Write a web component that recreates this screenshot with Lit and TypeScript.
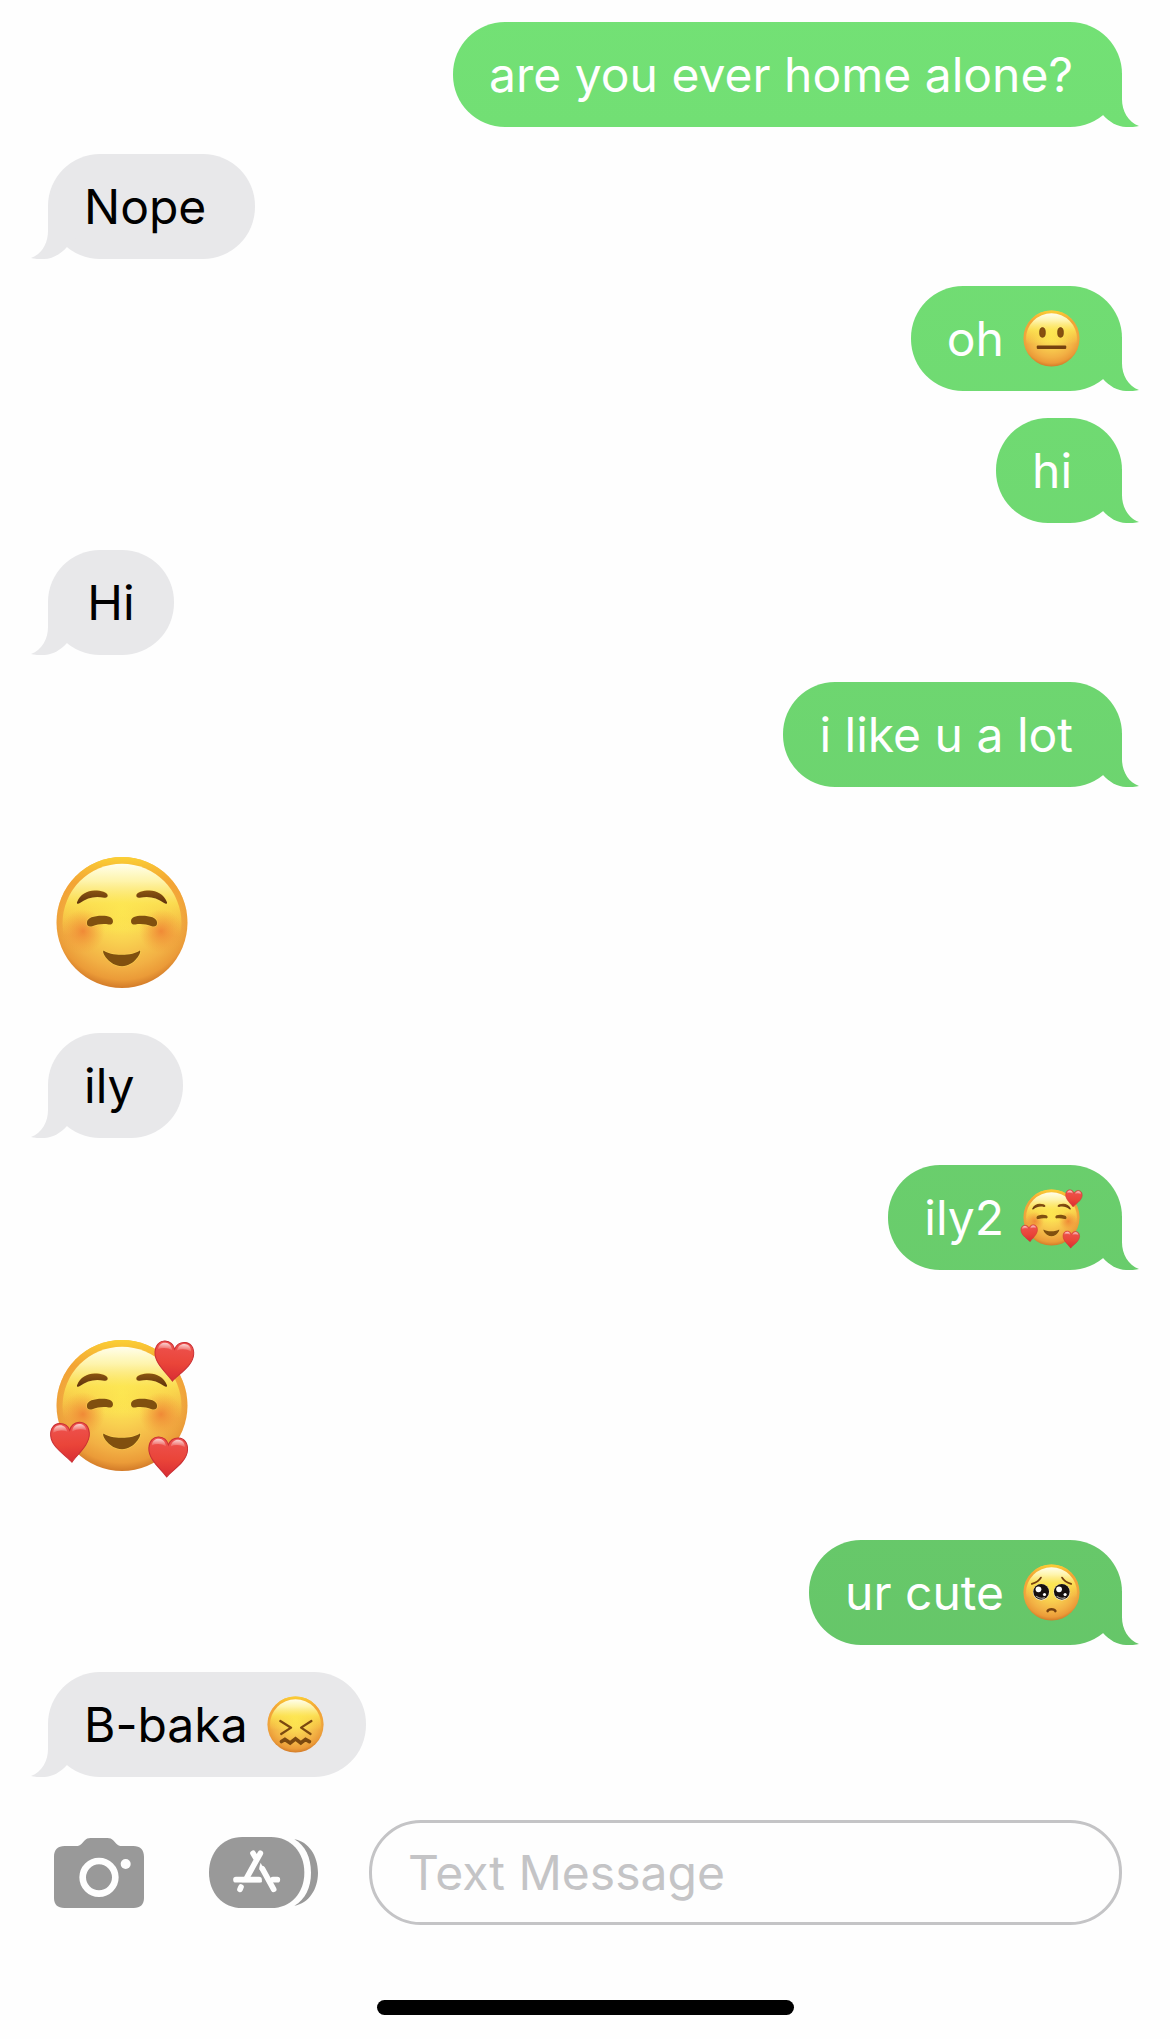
import { LitElement, html, svg, css, nothing } from "lit";
import { customElement, property } from "lit/decorators.js";

type Mood = "neutral" | "smile" | "hearts" | "pleading" | "confounded";

interface Message {
  from: "me" | "them";
  text?: string;
  emoji?: Mood;
}

const MESSAGES: Message[] = [
  { from: "me", text: "are you ever home alone?" },
  { from: "them", text: "Nope" },
  { from: "me", text: "oh", emoji: "neutral" },
  { from: "me", text: "hi" },
  { from: "them", text: "Hi" },
  { from: "me", text: "i like u a lot" },
  { from: "them", emoji: "smile" },
  { from: "them", text: "ily" },
  { from: "me", text: "ily2", emoji: "hearts" },
  { from: "them", emoji: "hearts" },
  { from: "me", text: "ur cute", emoji: "pleading" },
  { from: "them", text: "B-baka", emoji: "confounded" },
];

const LABELS: Record<Mood, string> = {
  neutral: "neutral face",
  smile: "smiling face",
  hearts: "smiling face with hearts",
  pleading: "pleading face",
  confounded: "confounded face",
};

const heart = (x: number, y: number, angle: number) => svg`
  <g transform="translate(${x} ${y}) rotate(${angle})">
    <path d="M0 60C-14 40-58 12-58-24C-58-46-45-58-30-58C-16-58-5-51 0-36C5-51 16-58 30-58C45-58 58-46 58-24C58 12 14 40 0 60Z" fill="url(#heart)" stroke="#c92f34" stroke-width="3"/>
    <path d="M-50-32C-48-48-38-53-29-53C-18-53-10-46-7-32Q-28-42-50-32ZM50-32C48-48 38-53 29-53C18-53 10-46 7-32Q28-42 50-32Z" fill="url(#shine)"/>
  </g>`;

const blushing = svg`
  <circle cx="-117" cy="26" r="66" fill="url(#blush)"/>
  <circle cx="117" cy="26" r="66" fill="url(#blush)"/>
  <g fill="url(#ink)" stroke="#ffe35a" stroke-opacity=".45" stroke-width="3" paint-order="stroke">
    <path d="M-134-62C-126-84-104-96-82-96C-62-96-44-90-43-82C-42-75-47-73-53-74C-82-80-104-74-126-58C-132-54-137-56-134-62Z"/>
    <path d="M134-62C126-84 104-96 82-96C62-96 44-90 43-82C42-75 47-73 53-74C82-80 104-74 126-58C132-54 137-56 134-62Z"/>
  </g>
  <g fill="#80500f" stroke="#ffe35a" stroke-opacity=".5" stroke-width="4" paint-order="stroke">
    <path d="M-105 0C-104-14-84-20-60-20C-40-20-27-15-27-4C-27 4-32 7-40 6C-58 3-73 6-89 11C-99 14-106 10-105 0Z"/>
    <path d="M105 0C104-14 84-20 60-20C40-20 27-15 27-4C27 4 32 7 40 6C58 3 73 6 89 11C99 14 106 10 105 0Z"/>
    <path d="M-55 84C-36 101 34 101 53 84C61 86 38 131 0 131C-38 131-63 88-55 84Z"/>
  </g>`;

const FEATURES: Record<Mood, unknown> = {
  smile: blushing,
  hearts: svg`${blushing}${heart(155, -133, 4)}${heart(-154, 110, -4)}${heart(137, 154, 3)}`,
  neutral: svg`
    <g fill="#87500f" stroke="#6d3f10" stroke-width="5">
      <ellipse cx="-63" cy="-42" rx="20" ry="34"/>
      <ellipse cx="63" cy="-42" rx="20" ry="34"/>
    </g>
    <rect x="-103" y="49" width="206" height="24" rx="7" fill="#75420f"/>`,
  pleading: svg`
    <g fill="none" stroke="#75400f" stroke-width="13" stroke-linecap="round">
      <path d="M-137-60C-108-69-86-83-74-104"/>
      <path d="M137-60C108-69 86-83 74-104"/>
      <path d="M-27 130C-20 113 20 113 27 130" stroke-width="18"/>
    </g>
    <circle cx="-72" cy="-2" r="58" fill="#f7efda"/>
    <circle cx="72" cy="-2" r="58" fill="#f7efda"/>
    <circle cx="-72" cy="-5" r="55" fill="#17100f"/>
    <circle cx="72" cy="-5" r="55" fill="#17100f"/>
    <g fill="#fff">
      <circle cx="-91" cy="-22" r="20"/><circle cx="53" cy="-22" r="20"/>
      <circle cx="-49" cy="14" r="11"/><circle cx="95" cy="14" r="11"/>
    </g>
    <g fill="none" stroke="#a9a29c" stroke-width="8">
      <path d="M-108 25Q-80 48-47 36"/><path d="M36 25Q64 48 97 36"/>
    </g>`,
  confounded: svg`
    <g fill="none" stroke="#7b4910" stroke-linecap="round" stroke-linejoin="round" stroke-width="16">
      <path d="M-106-24L-31 22L-100 66"/>
      <path d="M111-24L39 22L105 66"/>
      <path d="M-98 119L-74 104L-37 129L0 100L37 129L70 104L97 119" stroke-width="26" stroke-linejoin="miter"/>
    </g>`,
};

@customElement("emoji-face")
export class EmojiFace extends LitElement {
  @property() mood: Mood = "smile";

  static styles = css`
    :host {
      display: block;
      flex: none;
    }
    .face {
      display: block;
      width: 100%;
      height: 100%;
    }
  `;

  render() {
    return html`<svg class="face" viewBox="-220 -220 440 440" role="img" aria-label=${LABELS[this.mood]}>
      <defs>
        <radialGradient id="skin" gradientUnits="userSpaceOnUse" cx="0" cy="-40" r="240">
          <stop offset="0" stop-color="#fff357"/>
          <stop offset=".4" stop-color="#f9d150"/>
          <stop offset=".72" stop-color="#f2b044"/>
          <stop offset=".88" stop-color="#eb9b38"/>
          <stop offset="1" stop-color="#cf7626"/>
        </radialGradient>
        <linearGradient id="top" gradientUnits="userSpaceOnUse" x1="0" y1="-178" x2="0" y2="40">
          <stop offset="0" stop-color="#fffef0"/>
          <stop offset=".25" stop-color="#fffcb8" stop-opacity=".9"/>
          <stop offset=".55" stop-color="#fff65c" stop-opacity=".65"/>
          <stop offset="1" stop-color="#fff04a" stop-opacity="0"/>
        </linearGradient>
        <linearGradient id="rim" x1="0" y1="0" x2="0" y2="1">
          <stop offset="0" stop-color="#fbd034"/>
          <stop offset=".2" stop-color="#f3a030" stop-opacity=".8"/>
          <stop offset=".55" stop-color="#f09a30" stop-opacity="0"/>
        </linearGradient>
        <radialGradient id="blush">
          <stop offset="0" stop-color="#ef7f33" stop-opacity=".85"/>
          <stop offset=".5" stop-color="#f08b35" stop-opacity=".45"/>
          <stop offset="1" stop-color="#f39a38" stop-opacity="0"/>
        </radialGradient>
        <linearGradient id="ink" x1="0" y1="0" x2="0" y2="1">
          <stop offset="0" stop-color="#8a5411"/>
          <stop offset="1" stop-color="#5f320c"/>
        </linearGradient>
        <linearGradient id="heart" x1="0" y1="0" x2="0" y2="1">
          <stop offset="0" stop-color="#ee5350"/>
          <stop offset=".55" stop-color="#ea4539"/>
          <stop offset="1" stop-color="#d92c33"/>
        </linearGradient>
        <linearGradient id="shine" x1="0" y1="0" x2="0" y2="1">
          <stop offset="0" stop-color="#fff" stop-opacity=".75"/>
          <stop offset="1" stop-color="#fff" stop-opacity=".1"/>
        </linearGradient>
      </defs>
      <circle r="196" fill="url(#skin)"/>
      <circle r="196" fill="url(#rim)"/>
      <circle cy="2" r="178" fill="url(#top)"/>
      ${FEATURES[this.mood]}
    </svg>`;
  }
}

@customElement("app-root")
export class AppRoot extends LitElement {
  static styles = css`
    :host {
      display: block;
      background: #fefefe;
      color: #000;
      font-family: Inter, "Liberation Sans", sans-serif;
      font-size: 48px;
      line-height: 105px;
    }
    .page {
      display: flex;
      flex-direction: column;
      min-height: 100vh;
      box-sizing: border-box;
      padding: 22px 0 24px;
    }
    .thread {
      display: flex;
      flex-direction: column;
      gap: 27px;
      margin: 0;
      padding: 0 48px;
      list-style: none;
    }
    .row {
      display: flex;
    }
    .row.me {
      justify-content: flex-end;
    }
    .row.large {
      padding: 35px 0 10px;
    }
    .row.large.turn {
      padding-bottom: 34px;
    }
    .sticker {
      width: 148px;
      height: 147px;
    }
    .bubble {
      position: relative;
      display: flex;
      align-items: center;
      gap: 16px;
      box-sizing: border-box;
      min-width: 126px;
      padding: 0 49px 0 36px;
      border-radius: 52px;
    }
    .bubble.with-emoji {
      padding-right: 39px;
    }
    .them .bubble.short {
      justify-content: center;
      padding: 0 36px;
    }
    .inline {
      width: 63px;
      height: 63px;
    }
    .bubble::after {
      content: "";
      position: absolute;
      bottom: 0;
      width: 70px;
      height: 54px;
      clip-path: path("M52 0V26C52 38 58 49 69 53C66 54 60 54 56 54C48 54 39 49 33 42L20 30V0Z");
    }
    .me .bubble {
      color: #fff;
    }
    .me .bubble,
    .me .bubble::after {
      background: linear-gradient(#73e175, #63c066) fixed;
    }
    .me .bubble::after {
      right: -18px;
    }
    .them .bubble,
    .them .bubble::after {
      background: #e8e8ea;
    }
    .them .bubble::after {
      left: -18px;
      transform: scaleX(-1);
    }
    .composer {
      display: flex;
      align-items: center;
      margin-top: 43px;
      padding: 0 48px 0 54px;
    }
    .tool {
      flex: none;
      padding: 0;
      border: 0;
      background: none;
      color: #999;
    }
    .tool svg {
      display: block;
    }
    .apps {
      margin: 0 51px 0 65px;
    }
    .field {
      flex: 1;
      min-width: 0;
      height: 105px;
      box-sizing: border-box;
      padding: 0 36px;
      border: 3px solid #c4c4c6;
      border-radius: 52px;
      background: transparent;
      color: #000;
      font: inherit;
      line-height: 60px;
      outline: none;
    }
    .field::placeholder {
      color: #c4c4c6;
      opacity: 1;
    }
    .home {
      align-self: center;
      width: 417px;
      max-width: 60%;
      height: 15px;
      margin-top: 75px;
      border-radius: 8px;
      background: #000;
    }
  `;

  private renderMessage(message: Message, index: number) {
    const next = MESSAGES[index + 1];
    if (!message.text) {
      const turn = next && next.from !== message.from ? "turn" : "";
      return html`<li class="row large ${message.from} ${turn}">
        <emoji-face class="sticker" .mood=${message.emoji!}></emoji-face>
      </li>`;
    }
    const shape = message.emoji ? "with-emoji" : message.text.length < 3 ? "short" : "";
    return html`<li class="row ${message.from}">
      <div class="bubble ${shape}">
        <span>${message.text}</span>
        ${message.emoji ? html`<emoji-face class="inline" .mood=${message.emoji}></emoji-face>` : nothing}
      </div>
    </li>`;
  }

  render() {
    return html`<main class="page">
      <ul class="thread">
        ${MESSAGES.map((message, index) => this.renderMessage(message, index))}
      </ul>
      <form class="composer" @submit=${(event: Event) => event.preventDefault()}>
        <button class="tool" type="button" aria-label="Camera">
          <svg width="90" height="70" viewBox="0 0 270 210">
            <path fill="currentColor" d="M32 24H66C74 24 78 22 83 17L91 8C97 2 102 0 110 0H160C168 0 173 2 179 8L187 17C192 22 196 24 204 24H238C259 24 270 36 270 56V180C270 200 259 210 239 210H31C11 210 0 200 0 180V56C0 36 11 24 32 24Z"/>
            <circle cx="135" cy="118" r="49" fill="none" stroke="#fefefe" stroke-width="20"/>
            <circle cx="215" cy="78" r="15" fill="#fefefe"/>
          </svg>
        </button>
        <button class="tool apps" type="button" aria-label="Apps">
          <svg width="109" height="71" viewBox="536 83 327 213">
            <path fill="currentColor" d="M636 83H722C782 83 822 129 822 190C822 250 782 296 722 296H636C576 296 536 250 536 190C536 129 576 83 636 83Z"/>
            <path fill="currentColor" d="M792 90C835 97 863 140 863 190C863 240 835 282 792 289C825 270 842 235 842 190C842 145 825 108 792 90Z"/>
            <g fill="none" stroke="#fefefe" stroke-width="17" stroke-linecap="round">
              <path d="M668 132L676 145M690 132L650 204"/>
              <path d="M617 211H686M728 211H741"/>
              <path d="M696 178L730 240"/>
              <path d="M632 233L629 240"/>
            </g>
            <path fill="#fefefe" d="M640 203H686Q692 204 695 219H634ZM691 160Q686 172 688 182L706 190Z"/>
          </svg>
        </button>
        <input class="field" type="text" placeholder="Text Message" aria-label="Text Message" />
      </form>
      <div class="home"></div>
    </main>`;
  }
}
